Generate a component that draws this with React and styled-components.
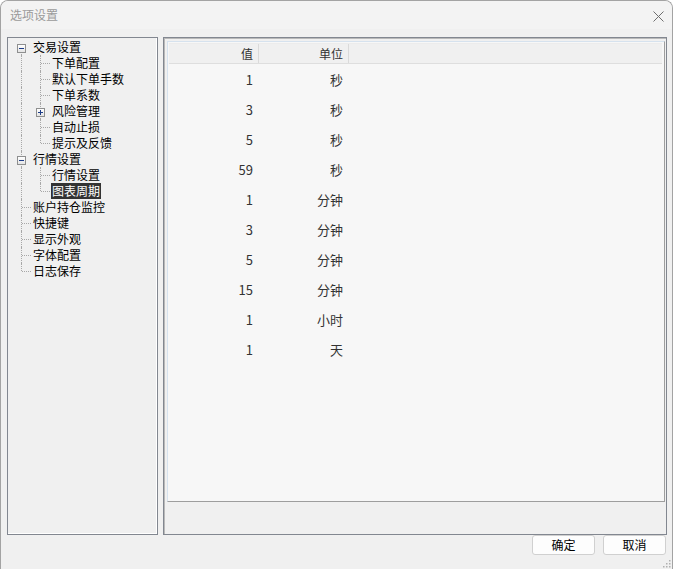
import React from 'react';
import styled, { createGlobalStyle, css } from 'styled-components';

const Global = createGlobalStyle`
  html, body { margin: 0; padding: 0; background: #ffffff; }
  * { box-sizing: border-box; }
  body { font-family: "Noto Sans CJK SC", "Noto Sans", sans-serif; }
`;

const Window = styled.div`
  position: relative;
  width: 673px;
  height: 569px;
  background: #f0f0f0;
  border: 1px solid #a3a3a3;
  border-bottom: none;
  border-radius: 8px 8px 0 0;
  display: flex;
  flex-direction: column;
  overflow: hidden;
`;

const TitleBar = styled.div`
  height: 28px;
  flex: none;
  background: #f3f3f3;
  display: flex;
  align-items: center;
  justify-content: space-between;
  padding: 0 8px 0 9px;
`;

const Title = styled.span`
  font-size: 12px;
  color: #9a9a9a;
  line-height: 14px;
`;

const CloseBtn = styled.span`
  display: flex;
  width: 12px;
  height: 12px;
  align-items: center;
  justify-content: center;
  margin-top: 2px;
`;

const Main = styled.div`
  display: flex;
  gap: 5px;
  padding: 8px 5px 0 6px;
  height: 506px;
  flex: none;
`;

const TreePanel = styled.div`
  width: 151px;
  height: 498px;
  border: 1px solid #828790;
  box-shadow: inset -1px -1px 0 #ffffff;
  background: #f0f0f0;
  padding: 1px 0 0 4px;
`;

const TreeRow = styled.div`
  display: flex;
  align-items: stretch;
  height: 16px;
`;

const Guide = styled.span`
  position: relative;
  flex: none;
  width: 19px;
  height: 16px;
`;

const VLine = styled.span`
  position: absolute;
  left: 9px;
  width: 0;
  border-left: 1px dotted #a8a8a8;
  ${p => p.$part === 'top' && css`top: 0; height: 8px;`}
  ${p => p.$part === 'bottom' && css`top: 8px; bottom: 0;`}
  ${p => p.$part === 'full' && css`top: 0; bottom: 0;`}
`;

const HLine = styled.span`
  position: absolute;
  top: 8px;
  left: 10px;
  right: 0;
  height: 0;
  border-top: 1px dotted #a8a8a8;
`;

const ExpandBox = styled.span`
  position: absolute;
  left: 5px;
  top: 5px;
  width: 9px;
  height: 9px;
  border: 1px solid #8e8f8f;
  background: linear-gradient(#ffffff, #e4e4e4);
  display: block;
`;

const Label = styled.span`
  margin-left: 1px;
  padding: 0 1px;
  font-size: 12px;
  line-height: 16px;
  white-space: nowrap;
  color: ${p => (p.$selected ? '#ffffff' : '#000000')};
  background: ${p => (p.$selected ? '#333333' : 'transparent')};
`;

const ListPanel = styled.div`
  width: 504px;
  height: 498px;
  border: 1px solid #828790;
  box-shadow: inset 1px 1px 0 #b9b9b9;
  background: #f0f0f0;
  padding: 3px 1px 32px 3px;
  display: flex;
`;

const ListView = styled.div`
  flex: 1;
  border: 1px solid;
  border-color: #d6e2ee #9e9e9e #9e9e9e #d6e2ee;
  background: #f7f7f7;
  padding: 1px 2px 1px 1px;
  display: flex;
  flex-direction: column;
`;

const HeaderRow = styled.div`
  display: grid;
  grid-template-columns: 90px 90px 1fr;
  height: 21px;
  background: #f0f0f0;
  border-top: 1px solid #ececec;
  border-bottom: 1px solid #dedede;
`;

const HeaderCell = styled.div`
  font-size: 12px;
  line-height: 19px;
  color: #333333;
  text-align: right;
  padding-right: 5px;
  border-right: ${p => (p.$last ? 'none' : '1px solid #dadada')};
`;

const Rows = styled.div`
  padding-top: 1px;
`;

const DataRow = styled.div`
  display: grid;
  grid-template-columns: 90px 90px 1fr;
  height: 30px;
`;

const DataCell = styled.div`
  font-size: 13px;
  line-height: 30px;
  color: #333333;
  text-align: right;
  padding-right: 6px;
`;

const Footer = styled.div`
  display: flex;
  justify-content: flex-end;
  gap: 8px;
  padding: 0 6px 0 0;
`;

const Button = styled.button`
  width: 63px;
  height: 20px;
  padding: 0;
  border: 1px solid #d0d0d0;
  border-radius: 3px;
  background: #fdfdfd;
  font-family: "Noto Sans CJK SC", "Noto Sans", sans-serif;
  font-size: 12px;
  line-height: 18px;
  color: #000000;
`;

const Grip = styled.svg`
  position: absolute;
  right: 1px;
  bottom: 1px;
`;

const Sign = ({ plus }) => (
  <svg width="7" height="7" viewBox="0 0 7 7" style={{ display: 'block' }}>
    <rect x="1" y="3" width="5" height="1" fill="#1d3c87" />
    {plus && <rect x="3" y="1" width="1" height="5" fill="#1d3c87" />}
  </svg>
);

const G = (v, opts = {}) => ({ v, ...opts });

const tree = [
  { label: '交易设置', guides: [G('bottom', { box: '-' })] },
  { label: '下单配置', guides: [G('full'), G('full', { h: true })] },
  { label: '默认下单手数', guides: [G('full'), G('full', { h: true })] },
  { label: '下单系数', guides: [G('full'), G('full', { h: true })] },
  { label: '风险管理', guides: [G('full'), G('full', { box: '+' })] },
  { label: '自动止损', guides: [G('full'), G('full', { h: true })] },
  { label: '提示及反馈', guides: [G('full'), G('top', { h: true })] },
  { label: '行情设置', guides: [G('full', { box: '-' })] },
  { label: '行情设置', guides: [G('full'), G('full', { h: true })] },
  { label: '图表周期', guides: [G('full'), G('top', { h: true })], selected: true },
  { label: '账户持仓监控', guides: [G('full', { h: true })] },
  { label: '快捷键', guides: [G('full', { h: true })] },
  { label: '显示外观', guides: [G('full', { h: true })] },
  { label: '字体配置', guides: [G('full', { h: true })] },
  { label: '日志保存', guides: [G('top', { h: true })] },
];

const rows = [
  ['1', '秒'],
  ['3', '秒'],
  ['5', '秒'],
  ['59', '秒'],
  ['1', '分钟'],
  ['3', '分钟'],
  ['5', '分钟'],
  ['15', '分钟'],
  ['1', '小时'],
  ['1', '天'],
];

export default function App() {
  return (
    <>
      <Global />
      <Window>
        <TitleBar>
          <Title>选项设置</Title>
          <CloseBtn>
            <svg width="11" height="11" viewBox="0 0 11 11">
              <path d="M0.5 0.5 L10.5 10.5 M10.5 0.5 L0.5 10.5" stroke="#6e6e6e" strokeWidth="1" fill="none" />
            </svg>
          </CloseBtn>
        </TitleBar>
        <Main>
          <TreePanel>
            {tree.map((item, i) => (
              <TreeRow key={i}>
                {item.guides.map((g, j) => (
                  <Guide key={j}>
                    {g.box ? (
                      <>
                        {(g.v === 'full' || g.v === 'top') && <VLine $part="top" />}
                        {(g.v === 'full' || g.v === 'bottom') && <VLine $part="bottom" />}
                        <ExpandBox>
                          <Sign plus={g.box === '+'} />
                        </ExpandBox>
                      </>
                    ) : (
                      <>
                        <VLine $part={g.v} />
                        {g.h && <HLine />}
                      </>
                    )}
                  </Guide>
                ))}
                <Label $selected={item.selected}>{item.label}</Label>
              </TreeRow>
            ))}
          </TreePanel>
          <ListPanel>
            <ListView>
              <HeaderRow>
                <HeaderCell>值</HeaderCell>
                <HeaderCell>单位</HeaderCell>
                <HeaderCell $last />
              </HeaderRow>
              <Rows>
                {rows.map(([v, u], i) => (
                  <DataRow key={i}>
                    <DataCell>{v}</DataCell>
                    <DataCell>{u}</DataCell>
                    <DataCell />
                  </DataRow>
                ))}
              </Rows>
            </ListView>
          </ListPanel>
        </Main>
        <Footer>
          <Button>确定</Button>
          <Button>取消</Button>
        </Footer>
        <Grip width="9" height="9" viewBox="0 0 9 9">
          {[[7, 1], [7, 4], [4, 4], [7, 7], [4, 7], [1, 7]].map(([x, y], i) => (
            <rect key={i} x={x} y={y} width="1.5" height="1.5" fill="#b0b0b0" />
          ))}
        </Grip>
      </Window>
    </>
  );
}
